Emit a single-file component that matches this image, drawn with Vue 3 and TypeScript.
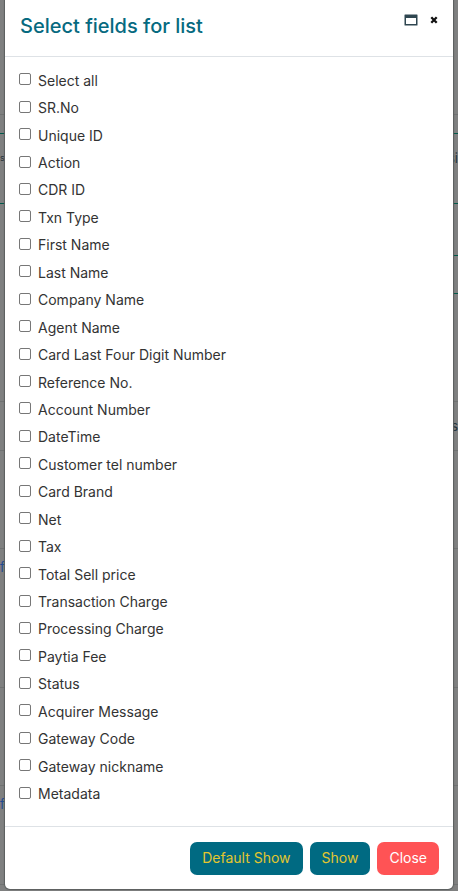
<script setup lang="ts">
import { ref, computed } from 'vue'

const fields: string[] = [
  'SR.No',
  'Unique ID',
  'Action',
  'CDR ID',
  'Txn Type',
  'First Name',
  'Last Name',
  'Company Name',
  'Agent Name',
  'Card Last Four Digit Number',
  'Reference No.',
  'Account Number',
  'DateTime',
  'Customer tel number',
  'Card Brand',
  'Net',
  'Tax',
  'Total Sell price',
  'Transaction Charge',
  'Processing Charge',
  'Paytia Fee',
  'Status',
  'Acquirer Message',
  'Gateway Code',
  'Gateway nickname',
  'Metadata',
]

const selected = ref<string[]>([])
const allSelected = computed<boolean>({
  get: () => selected.value.length === fields.length,
  set: (on) => {
    selected.value = on ? [...fields] : []
  },
})

interface Band {
  height: number
  left?: string
  right?: string
  tone?: string
}

// Strips of the page that stay visible on either side of the dialog
const bands: Band[] = [
  { height: 115 },
  { height: 19, tone: 'green' },
  { height: 70, left: 's', right: 'si', tone: 'green' },
  { height: 52, tone: 'green-right' },
  { height: 38, tone: 'green-right' },
  { height: 108 },
  { height: 49, right: 's' },
  { height: 98 },
  { height: 139, left: 'f', tone: 'link' },
  { height: 98 },
  { height: 99, left: 'f', tone: 'link' },
]
</script>

<template>
  <div class="page">
    <div class="backdrop" aria-hidden="true">
      <div
        v-for="(band, i) in bands"
        :key="i"
        class="band"
        :class="band.tone"
        :style="{ height: band.height + 'px' }"
      >
        <span class="edge edge-left">{{ band.left }}</span>
        <span class="edge edge-right">{{ band.right }}</span>
      </div>
    </div>

    <section class="dialog" role="dialog" aria-labelledby="dialog-title">
      <header class="dialog-header">
        <h1 id="dialog-title">Select fields for list</h1>
        <div class="tools">
          <button type="button" class="tool" aria-label="Maximize">
            <svg width="14" height="12" viewBox="0 0 14 12">
              <path
                fill="#2f4650"
                fill-rule="evenodd"
                d="M1 0.5H13Q13.5 0.5 13.5 1V11Q13.5 11.5 13 11.5H1Q0.5 11.5 0.5 11V1Q0.5 0.5 1 0.5ZM2 4V10H12V4Z"
              />
            </svg>
          </button>
          <button type="button" class="tool" aria-label="Close dialog">
            <svg width="8" height="8" viewBox="0 0 8 8">
              <path d="M1.3 1.3L6.7 6.7M6.7 1.3L1.3 6.7" stroke="#111" stroke-width="2.3" />
            </svg>
          </button>
        </div>
      </header>

      <div class="dialog-body">
        <label class="field">
          <input v-model="allSelected" type="checkbox" />
          <span>Select all</span>
        </label>
        <label v-for="name in fields" :key="name" class="field">
          <input v-model="selected" type="checkbox" :value="name" />
          <span>{{ name }}</span>
        </label>
      </div>

      <footer class="dialog-footer">
        <button type="button" class="btn">Default Show</button>
        <button type="button" class="btn">Show</button>
        <button type="button" class="btn btn-close">Close</button>
      </footer>
    </section>
  </div>
</template>

<style>
body {
  background: #7f8080;
}
</style>

<style scoped>
.page {
  position: relative;
  box-sizing: border-box;
  min-height: 100vh;
  padding: 0 5px 2px;
  display: flex;
  font-family: Inter, 'Open Sans', sans-serif;
}

.backdrop {
  position: absolute;
  inset: 0;
}

.band {
  box-sizing: border-box;
  display: flex;
  justify-content: space-between;
  border-bottom: 1px solid #6f7272;
  font-size: 13px;
  line-height: 16px;
  color: #26343b;
}

.green,
.green-right {
  border-bottom-color: #00584a;
}

.link {
  color: #214b91;
}

.edge {
  padding-top: 16px;
  white-space: nowrap;
}

.edge-left {
  width: 5px;
  font-size: 9px;
}

/* These two lines belong to the right-hand column only */
.green-right {
  border-bottom: 0;
}

.green-right .edge-right {
  box-sizing: border-box;
  width: 50%;
  border-bottom: 1px solid #00584a;
}

.link .edge-left {
  padding-top: 10px;
  font-size: 13px;
}

.dialog {
  position: relative;
  flex: 1;
  display: flex;
  flex-direction: column;
  background: #fff;
  border-radius: 0 0 5px 5px;
  box-shadow: 0 0 1px 1px #5b5e5e;
}

.dialog-header {
  box-sizing: border-box;
  height: 57px;
  padding: 0 15px;
  display: flex;
  align-items: flex-start;
  justify-content: space-between;
  border-bottom: 1px solid #dee2e6;
}

h1 {
  margin: 0;
  padding-top: 11px;
  font-size: 20px;
  line-height: 30px;
  font-weight: 500;
  color: #066a80;
}

.tool {
  display: flex;
  padding: 0;
  border: 0;
  background: none;
}

.tools {
  display: flex;
  align-items: center;
  gap: 12px;
  padding-top: 14px;
}

.dialog-body {
  flex: 1;
  display: flex;
  flex-direction: column;
  padding: 10px 14px 18px;
}

.field {
  flex: 1;
  display: flex;
  align-items: center;
  gap: 7px;
  font-size: 14px;
  line-height: 20px;
  color: #333;
}

.field input {
  appearance: none;
  box-sizing: border-box;
  width: 12px;
  height: 12px;
  margin: 0 0 3px;
  border: 1px solid #777;
  border-radius: 2px;
  background: #fff;
}

.field input:checked {
  border-color: #006a80;
  background: #006a80;
}

.dialog-footer {
  display: flex;
  justify-content: flex-end;
  gap: 7px;
  padding: 15px 14px 14px;
  border-top: 1px solid #dee2e6;
}

.btn {
  height: 33px;
  padding: 0 12px 2px;
  border: 0;
  border-radius: 7px;
  background: #006a82;
  color: #e3c62f;
  font-family: inherit;
  font-size: 14px;
  line-height: 20px;
}

.btn-close {
  background: #ff5355;
  color: #fff;
}
</style>
